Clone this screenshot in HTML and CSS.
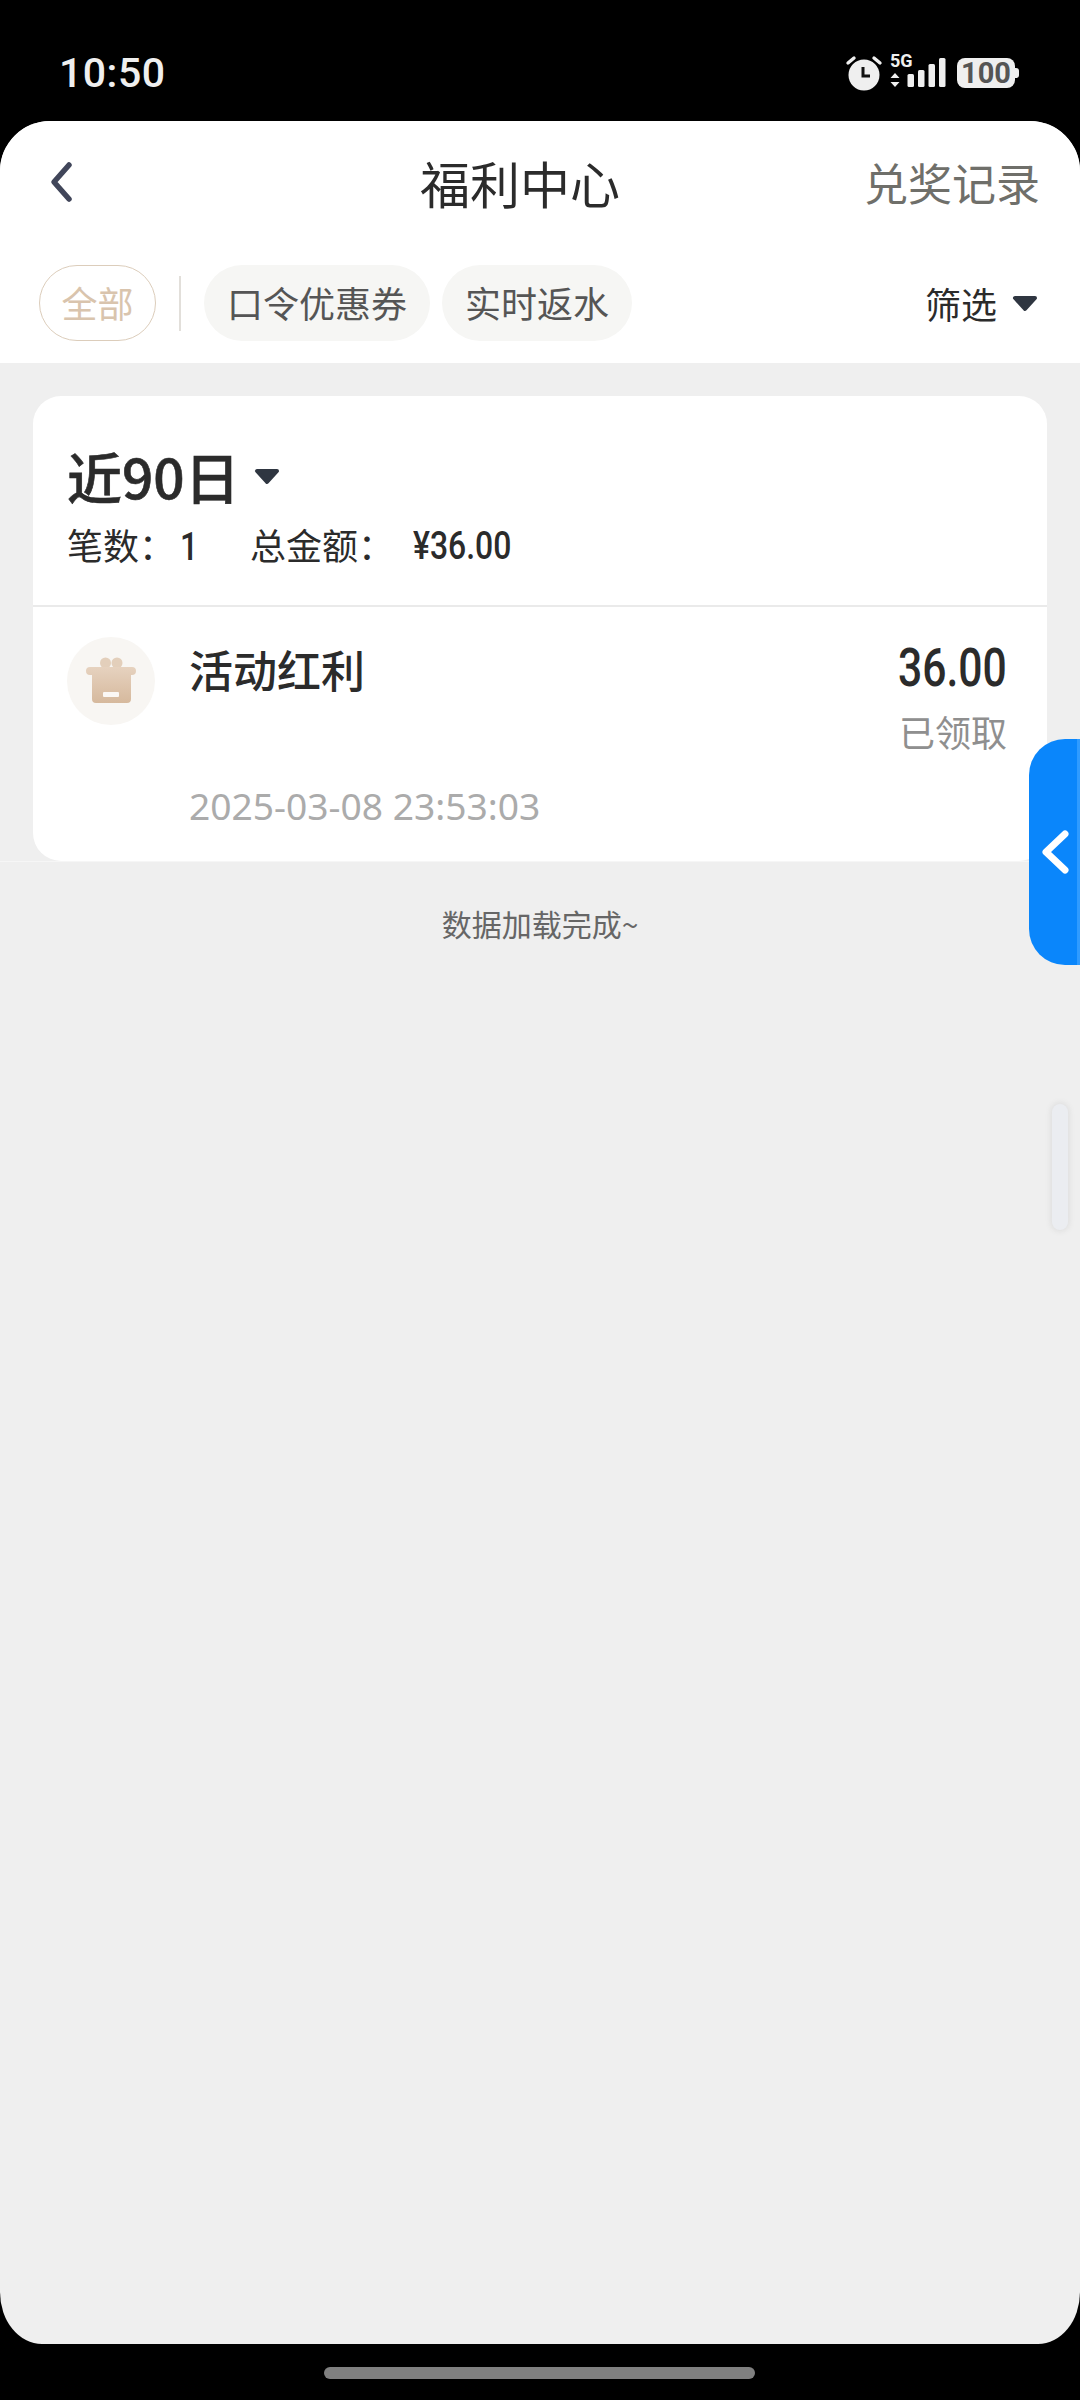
FILE: index.html
```html
<!DOCTYPE html>
<html lang="zh-CN">
<head>
    <meta charset="UTF-8">
    <meta name="viewport" content="width=device-width, initial-scale=1.0">
    <title>福利中心</title>
    <link rel="stylesheet" href="styles.css">
</head>
<body>
    <div class="status-bar">
        <span class="clock">10:50</span>
        <div class="status-icons">
            <svg class="alarm" width="40" height="40" viewBox="0 0 40 40">
                <circle cx="20" cy="22" r="15.500" fill="#efefef"/>
                <path d="M19 14v9h7" fill="none" stroke="#111" stroke-width="3"/>
                <path d="M4 10l6-5M36 10l-6-5" stroke="#efefef" stroke-width="3.400" stroke-linecap="round"/>
            </svg>
            <svg class="signal" width="58" height="48" viewBox="0 -4 58 48">
                <text x="2" y="14" class="signal-label">5G</text>
                <path d="M7 20l4.500 5h-9zM7 34l4.500-5h-9z" fill="#efefef"/>
                <rect x="19.500" y="21" width="6.500" height="13" rx="1.500" fill="#efefef"/>
                <rect x="30" y="17" width="6.500" height="17" rx="1.500" fill="#efefef"/>
                <rect x="40.500" y="11" width="6.500" height="23" rx="1.500" fill="#efefef"/>
                <rect x="51" y="5" width="6.500" height="29" rx="1.500" fill="#efefef"/>
            </svg>
            <div class="battery"><span>100</span></div>
        </div>
    </div>

    <div class="sheet">
        <div class="nav">
            <svg class="back" width="30" height="44" viewBox="0 0 30 44">
                <path d="M23 5L8 22l15 17" fill="none" stroke="#41465a" stroke-width="5.500" stroke-linecap="round" stroke-linejoin="round"/>
            </svg>
            <h1 class="nav-title">福利中心</h1>
            <span class="nav-link">兑奖记录</span>
        </div>

        <div class="tabs">
            <span class="chip chip-active">全部</span>
            <span class="tabs-divider"></span>
            <span class="chip">口令优惠券</span>
            <span class="chip">实时返水</span>
            <span class="filter">筛选
                <svg class="caret" width="26" height="17" viewBox="0 0 26 17"><path d="M3 3h20L13 14z" fill="#2f3641" stroke="#2f3641" stroke-width="4" stroke-linejoin="round"/></svg>
            </span>
        </div>

        <div class="content">
            <div class="list-wrap">
                <div class="card">
                    <div class="card-head">
                        <div class="period">近90日
                            <svg class="caret caret-period" width="26" height="17" viewBox="0 0 26 17"><path d="M3 3h20L13 14z" fill="#2f3641" stroke="#2f3641" stroke-width="4" stroke-linejoin="round"/></svg>
                        </div>
                        <div class="summary">
                            <span class="summary-count">笔数：<b class="num num-count">1</b></span>
                            <span class="summary-label">总金额：</span><b class="num">¥36.00</b>
                        </div>
                    </div>
                    <div class="record">
                        <div class="record-icon">
                            <svg width="88" height="88" viewBox="0 0 88 88">
                                <defs>
                                    <linearGradient id="gift" x1="0" y1="0" x2="0" y2="1">
                                        <stop offset="0" stop-color="#e6d2bf"/>
                                        <stop offset="1" stop-color="#d6b99d"/>
                                    </linearGradient>
                                </defs>
                                <circle cx="38.500" cy="26" r="5.500" fill="#e3cfbb"/>
                                <circle cx="50" cy="26" r="5.500" fill="#e3cfbb"/>
                                <path d="M23 30h42a4 4 0 0 1 0 8h-1v24a4 4 0 0 1-4 4H29a4 4 0 0 1-4-4V38h-2a4 4 0 0 1 0-8z" fill="url(#gift)"/>
                                <rect x="36" y="55" width="16" height="5" rx="1" fill="#fbf8f5"/>
                            </svg>
                        </div>
                        <div class="record-main">
                            <div class="record-top">
                                <span class="record-name">活动红利</span>
                                <div class="record-side">
                                    <div class="record-amount">36.00</div>
                                    <div class="record-state">已领取</div>
                                </div>
                            </div>
                            <div class="record-date">2025-03-08 23:53:03</div>
                        </div>
                    </div>
                </div>
            </div>
            <p class="load-done">数据加载完成~</p>
        </div>

        <div class="side-tab">
            <svg width="30" height="46" viewBox="0 0 30 46">
                <path d="M25 5L6 23l19 18" fill="none" stroke="#fff" stroke-width="7" stroke-linecap="round" stroke-linejoin="round"/>
            </svg>
        </div>
        <div class="scroll-thumb"></div>
    </div>

    <div class="home-area"><span class="home-pill"></span></div>
</body>
</html>
```

FILE: styles.css
```css
* {
    box-sizing: border-box;
}
body {
    margin: 0;
    width: 1080px;
    height: 2400px;
    overflow: hidden;
    background-color: #000;
    font-family: "Noto Sans CJK SC", "Noto Sans", sans-serif;
    color: #2b2b2b;
}
.status-bar {
    height: 121px;
    display: flex;
    justify-content: space-between;
    align-items: center;
    padding: 24px 65px 0 59px;
    color: #efefef;
}
.clock {
    font-family: Roboto, sans-serif;
    font-size: 41px;
    font-weight: 500;
    letter-spacing: 0.5px;
}
.status-icons {
    display: flex;
    align-items: center;
}
.alarm {
    margin-right: 4px;
}
.signal-label {
    font-family: Roboto, sans-serif;
    font-size: 18px;
    font-weight: 700;
    fill: #efefef;
}
.signal {
    margin-right: 11px;
}
.battery {
    position: relative;
    width: 58px;
    height: 30px;
    border-radius: 8px;
    background-color: #efefef;
    color: #555;
    font-family: Roboto, sans-serif;
    font-size: 29px;
    font-weight: 700;
    line-height: 30px;
    text-align: center;
}
.battery::after {
    content: "";
    position: absolute;
    right: -4px;
    top: 10px;
    width: 4px;
    height: 10px;
    border-radius: 0 3px 3px 0;
    background-color: #efefef;
}
.sheet {
    position: relative;
    height: 2223px;
    border-radius: 50px 50px 42px 42px / 50px 50px 52px 52px;
    background-color: #efefef;
    overflow: hidden;
}
.nav {
    height: 128px;
    display: flex;
    align-items: center;
    padding: 0 40px 6px 46px;
    background-color: #fff;
}
.back {
    margin-right: 100px;
}
.nav-title {
    margin: 0 auto;
    font-size: 50px;
    font-weight: 400;
    line-height: 60px;
    color: #2b2b2b;
}
.nav-link {
    font-size: 44px;
    line-height: 60px;
    color: #6f6f6a;
}
.tabs {
    display: flex;
    align-items: center;
    height: 114px;
    padding: 16px 42px 22px 39px;
    background-color: #fff;
}
.chip {
    height: 76px;
    padding: 0 23px;
    margin-right: 12px;
    border-radius: 38px;
    background-color: #f6f6f4;
    color: #555;
    font-size: 36px;
    line-height: 74px;
}
.chip-active {
    width: 117px;
    margin-right: 0;
    padding: 0;
    text-align: center;
    border: 1px solid #dccdbb;
    background-color: #fff;
    color: #d9c4ad;
    line-height: 72px;
}
.tabs-divider {
    width: 2px;
    height: 55px;
    margin: 0 23px;
    background-color: #e2dfda;
}
.filter {
    display: flex;
    align-items: center;
    margin-left: auto;
    font-size: 36px;
    color: #2b2b2b;
}
.caret {
    margin-left: 15px;
}
.caret-period {
    margin-left: 14px;
    margin-top: 2px;
}
.list-wrap {
    padding: 33px 33px 0 33px;
    border-bottom: 1px solid #f6f6f6;
}
.card {
    border-radius: 28px;
    background-color: #fff;
}
.card-head {
    height: 211px;
    padding: 49px 33px 0 34px;
    border-bottom: 2px solid #eaeaea;
}
.period {
    display: flex;
    align-items: center;
    height: 60px;
    font-size: 55px;
    font-weight: 500;
    -webkit-text-stroke: 0.6px #2b2b2b;
}
.summary {
    display: flex;
    margin-top: 19px;
    font-size: 36px;
    line-height: 40px;
}
.summary-count {
    width: 183px;
}
.summary-label {
    width: 163px;
}
.num {
    display: inline-block;
    margin-top: 2px;
    transform: scaleX(0.84);
    transform-origin: left center;
    font-family: Roboto, sans-serif;
    font-size: 38px;
    font-weight: 500;
}
.num-count {
    margin-left: 5px;
}
.record {
    display: flex;
    padding: 30px 40px 33px 34px;
}
.record-icon {
    width: 88px;
    height: 88px;
    margin-right: 34px;
    border-radius: 50%;
    background-color: #f8f6f3;
}
.record-main {
    flex: 1;
}
.record-top {
    display: flex;
    justify-content: space-between;
}
.record-name {
    font-size: 44px;
    font-weight: 500;
    line-height: 64px;
}
.record-side {
    text-align: right;
}
.record-amount {
    transform: scaleX(0.79);
    transform-origin: right center;
    font-family: Roboto, sans-serif;
    font-size: 54px;
    font-weight: 500;
    line-height: 62px;
}
.record-state {
    margin-top: 12px;
    font-size: 36px;
    line-height: 40px;
    color: #8f8f8f;
}
.record-date {
    margin-top: 33px;
    font-family: "Noto Sans", sans-serif;
    font-size: 37.2px;
    line-height: 44px;
    color: #ababab;
}
.load-done {
    margin: 38px 0 0 0;
    text-align: center;
    font-size: 30px;
    line-height: 46px;
    color: #666;
}
.side-tab {
    position: absolute;
    right: 0;
    top: 618px;
    width: 51px;
    height: 226px;
    display: flex;
    align-items: center;
    padding-left: 11px;
    border-right: 3px solid #2f9bff;
    border-radius: 36px 0 0 36px;
    background-color: #0a86fb;
}
.scroll-thumb {
    position: absolute;
    left: 1052px;
    top: 983px;
    width: 16px;
    height: 126px;
    border-radius: 8px;
    background-color: #ebedf1;
    box-shadow: 0 0 5px 2px #e0e0e0;
}
.home-area {
    height: 56px;
    padding-top: 23px;
}
.home-pill {
    display: block;
    width: 431px;
    height: 12px;
    margin-left: 324px;
    border-radius: 6px;
    background-color: #808080;
}
```
